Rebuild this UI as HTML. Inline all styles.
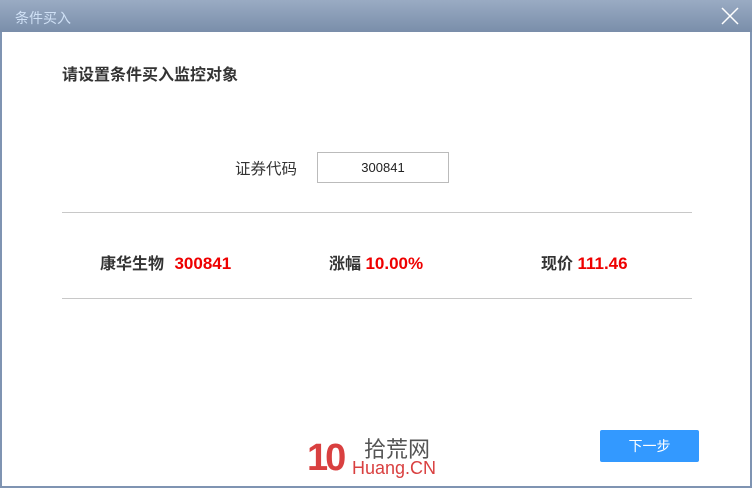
<!DOCTYPE html><html><head><meta charset="utf-8"><style>
body{margin:0;width:752px;height:490px;overflow:hidden;font-family:"Liberation Sans","Noto Sans CJK SC",sans-serif;}
.win{position:absolute;left:0;top:0;width:748px;height:486px;border:2px solid #7f94b2;border-top:none;background:#fff}
.tb{position:absolute;left:0;top:0;width:752px;height:32px;background:linear-gradient(#9aabc3,#7a8eaa);}
.tb span{position:absolute;left:15px;top:8px;font-size:14px;color:#cfe0f5}
.x{position:absolute;left:720px;top:6px}
.t{position:absolute;font-family:"Liberation Sans","Noto Sans CJK SC",sans-serif;white-space:nowrap}
.hr{position:absolute;left:62px;width:630px;height:1px;background:#c8c8c8}
</style></head><body>
<div class="win"></div>
<div class="tb"><span>条件买入</span>
<svg class="x" width="20" height="20"><path d="M2 2L18 18M18 2L2 18" stroke="#fff" stroke-width="1.5"/></svg></div>
<div class="t" style="left:62px;top:61px;font-size:16px;font-weight:bold;color:#333">请设置条件买入监控对象</div>
<div class="t" style="left:235px;top:157px;font-size:15.5px;color:#333">证券代码</div>
<div style="position:absolute;left:317px;top:152px;width:130px;height:29px;border:1px solid #bbb;font-size:13px;line-height:29px;text-align:center;color:#222">300841</div>
<div class="hr" style="top:212px"></div>
<div class="t" style="left:100px;top:250px;font-size:16px;font-weight:bold;color:#333">康华生物 <span style="color:#e00;margin-left:6px;font-size:17px">300841</span></div>
<div class="t" style="left:329px;top:250px;font-size:16px;font-weight:bold;color:#333">涨幅 <span style="color:#e00;font-size:17px">10.00%</span></div>
<div class="t" style="left:541px;top:250px;font-size:16px;font-weight:bold;color:#333">现价 <span style="color:#e00;font-size:17px">111.46</span></div>
<div class="hr" style="top:298px"></div>
<div style="position:absolute;left:600px;top:430px;width:99px;height:32px;background:#3399ff;border-radius:2px;color:#fff;font-size:14px;line-height:32px;text-align:center">下一步</div>
<div class="t" style="left:307px;top:436px;font-size:38px;line-height:44px;font-weight:bold;color:#d94040;letter-spacing:-3px">10</div>
<div class="t" style="left:364px;top:437px;font-size:22px;line-height:26px;color:#555">拾荒网</div>
<div class="t" style="left:352px;top:457px;font-size:18px;line-height:22px;color:#d94040">Huang.CN</div>
</body></html>
